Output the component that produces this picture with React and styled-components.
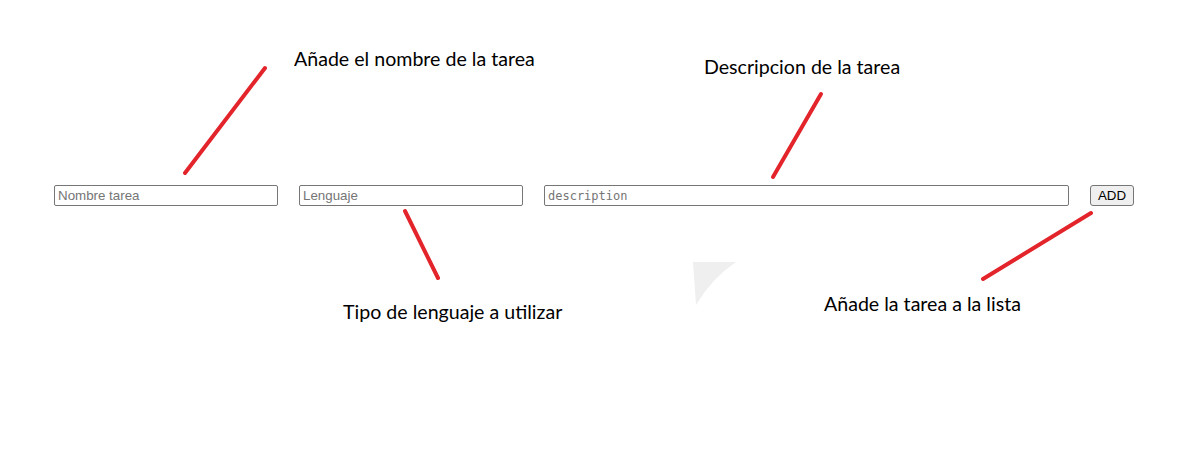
import React from 'react';
import styled, { createGlobalStyle } from 'styled-components';

const GlobalStyle = createGlobalStyle`
  body {
    margin: 0;
    background: #ffffff;
    font-family: "Liberation Sans", Arial, sans-serif;
  }
`;

const Page = styled.div`
  position: relative;
  width: 1183px;
  height: 460px;
  overflow: hidden;
  background: #fff;
`;

const Form = styled.form`
  display: flex;
  align-items: flex-start;
  gap: 21px;
  padding: 185px 0 0 54px;
`;

const Field = styled.input`
  box-sizing: border-box;
  width: ${p => p.$width}px;
  height: 21px;
  margin: 0;
  padding: 1px 3px;
  border: 1px solid #767676;
  border-radius: 2px;
  background: #fff;
  font-family: ${p => (p.$mono ? '"DejaVu Sans Mono", "Liberation Mono", monospace' : '"Liberation Sans", Arial, sans-serif')};
  font-size: ${p => (p.$mono ? '12px' : '13.33px')};
  color: #000;
  outline: none;

  &::placeholder {
    color: #757575;
  }
`;

const AddButton = styled.button`
  box-sizing: border-box;
  width: 44px;
  height: 21px;
  margin: 0;
  padding: 0;
  border: 1px solid #767676;
  border-radius: 3px;
  background: #efefef;
  font-family: "Liberation Sans", Arial, sans-serif;
  font-size: 13.33px;
  color: #000;
  cursor: pointer;
`;

const Overlay = styled.svg`
  position: absolute;
  left: 0;
  top: 0;
  pointer-events: none;
`;

const Note = styled.span`
  position: absolute;
  left: ${p => p.$x}px;
  top: ${p => p.$y}px;
  font-family: Lato, "Open Sans", sans-serif;
  font-size: 19.6px;
  line-height: 22px;
  color: #000;
  white-space: nowrap;
`;

const lines = [
  [265, 68, 185, 173],
  [405, 211, 438, 278],
  [821, 94, 773, 177],
  [1091, 213, 983, 279],
];

const App = () => (
  <Page>
    <GlobalStyle />
    <Form onSubmit={e => e.preventDefault()}>
      <Field $width={224} placeholder="Nombre tarea" />
      <Field $width={224} placeholder="Lenguaje" />
      <Field $width={525} $mono placeholder="description" />
      <AddButton type="submit">ADD</AddButton>
    </Form>

    <Overlay width="1183" height="460">
      <path d="M693 262 L736 262 Q712 278 696 305 Z" fill="#efefef" />
      {lines.map(([x1, y1, x2, y2], i) => (
        <line key={i} x1={x1} y1={y1} x2={x2} y2={y2} stroke="#e3242b" strokeWidth="4" strokeLinecap="round" />
      ))}
    </Overlay>

    <Note $x={294} $y={48}>Añade el nombre de la tarea</Note>
    <Note $x={704} $y={56}>Descripcion de la tarea</Note>
    <Note $x={343} $y={301}>Tipo de lenguaje a utilizar</Note>
    <Note $x={824} $y={293}>Añade la tarea a la lista</Note>
  </Page>
);

export default App;
